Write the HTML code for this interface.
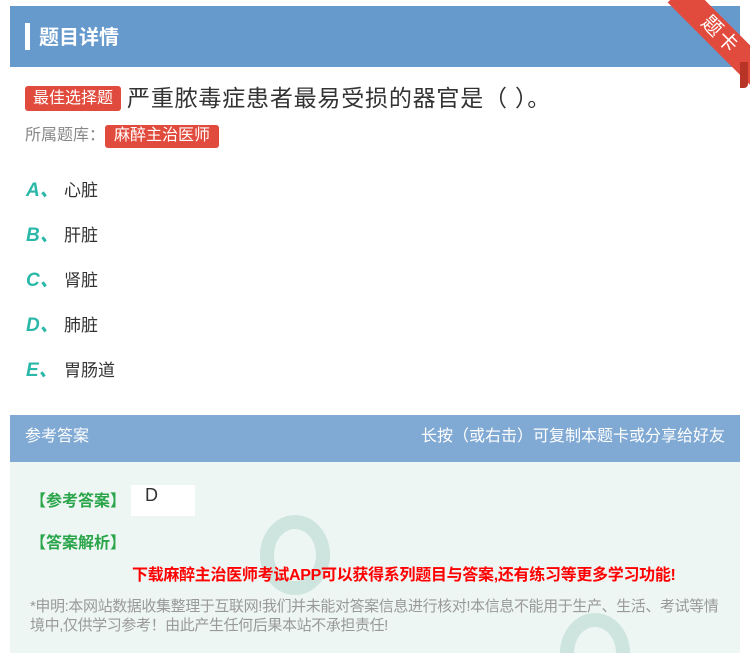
<!DOCTYPE html>
<html><head><meta charset="utf-8"><style>
*{margin:0;padding:0;box-sizing:border-box}
html,body{width:750px;height:653px;overflow:hidden}
body{background:#fff;font-family:"Liberation Sans","Noto Sans CJK SC",sans-serif;position:relative}
.hd{position:absolute;left:10px;top:6px;width:730px;height:61px;background:#6699cc}
.hd .bar{position:absolute;left:15px;top:17px;width:5px;height:27px;background:#fff}
.hd .t{position:absolute;left:29px;top:15px;color:#fff;font-size:20px;font-weight:bold}
.rib{position:absolute;left:660px;top:21px;width:120px;height:28px;background:#e14b3d;transform:rotate(45deg);color:#fff;font-size:20px;text-align:center;line-height:28px;letter-spacing:2px}
.fold{position:absolute;left:740px;top:62px;width:8px;height:26px;background:#b83427;border-radius:0 0 4px 0}
.tag{display:inline-block;background:#e14b3d;color:#fff;border-radius:3px}
.q{position:absolute;left:25px;top:79px;font-size:23px;color:#333;letter-spacing:0.8px}
.q .tag{font-size:16px;padding:0 8px;height:25px;line-height:25px;vertical-align:3px;margin-right:6px;letter-spacing:0}
.lib{position:absolute;left:25px;top:121px;font-size:16px;color:#888}
.lib .tag{font-size:16px;padding:0 9px;height:23px;line-height:22px}
.op{position:absolute;left:26px;font-size:17px;color:#333}
.op b{display:inline-block;width:38px;color:#2ab8a8;font-style:italic;font-size:19px}
.ans{position:absolute;left:10px;top:415px;width:730px;height:238px;background:#eef6f4;overflow:hidden}
.ah{height:47px;background:#80aad4;color:#fff;font-size:16px;line-height:44px;padding:0 15px;display:flex;justify-content:space-between}
.g{position:absolute;color:#2aa54a;font-size:16px;font-weight:bold}
.red{position:absolute;left:122px;top:146px;color:#f00;font-size:16px;font-weight:bold;letter-spacing:-0.3px}
.dis{position:absolute;left:20px;top:182px;width:700px;color:#999;font-size:15px;line-height:19px;letter-spacing:-0.4px}
.img{position:absolute;left:121px;top:70px;width:64px;height:31px;background:#fff;font-size:18px;color:#333;padding-left:14px}
.ring{position:absolute;border-radius:50%;border:14px solid #b8d8d0;opacity:.6}
</style></head><body>
<div class="hd"><div class="bar"></div><div class="t">题目详情</div></div>
<div class="rib">题卡</div><div class="fold"></div>
<div class="q"><span class="tag">最佳选择题</span>严重脓毒症患者最易受损的器官是（ ）。</div>
<div class="lib">所属题库：<span class="tag">麻醉主治医师</span></div>
<div class="op" style="top:175px"><b>A、</b>心脏</div>
<div class="op" style="top:220px"><b>B、</b>肝脏</div>
<div class="op" style="top:265px"><b>C、</b>肾脏</div>
<div class="op" style="top:310px"><b>D、</b>肺脏</div>
<div class="op" style="top:355px"><b>E、</b>胃肠道</div>
<div class="ans">
<div class="ah"><span>参考答案</span><span>长按（或右击）可复制本题卡或分享给好友</span></div>
<div class="ring" style="left:250px;top:100px;width:70px;height:80px"></div>
<div class="ring" style="left:550px;top:198px;width:70px;height:80px"></div>
<div class="g" style="left:20px;top:72px">【参考答案】</div>
<div class="img">D</div>
<div class="g" style="left:20px;top:114px">【答案解析】</div>
<div class="red">下载麻醉主治医师考试APP可以获得系列题目与答案,还有练习等更多学习功能!</div>
<div class="dis">*申明:本网站数据收集整理于互联网!我们并未能对答案信息进行核对!本信息不能用于生产、生活、考试等情境中,仅供学习参考！由此产生任何后果本站不承担责任!</div>
</div>
</body></html>
